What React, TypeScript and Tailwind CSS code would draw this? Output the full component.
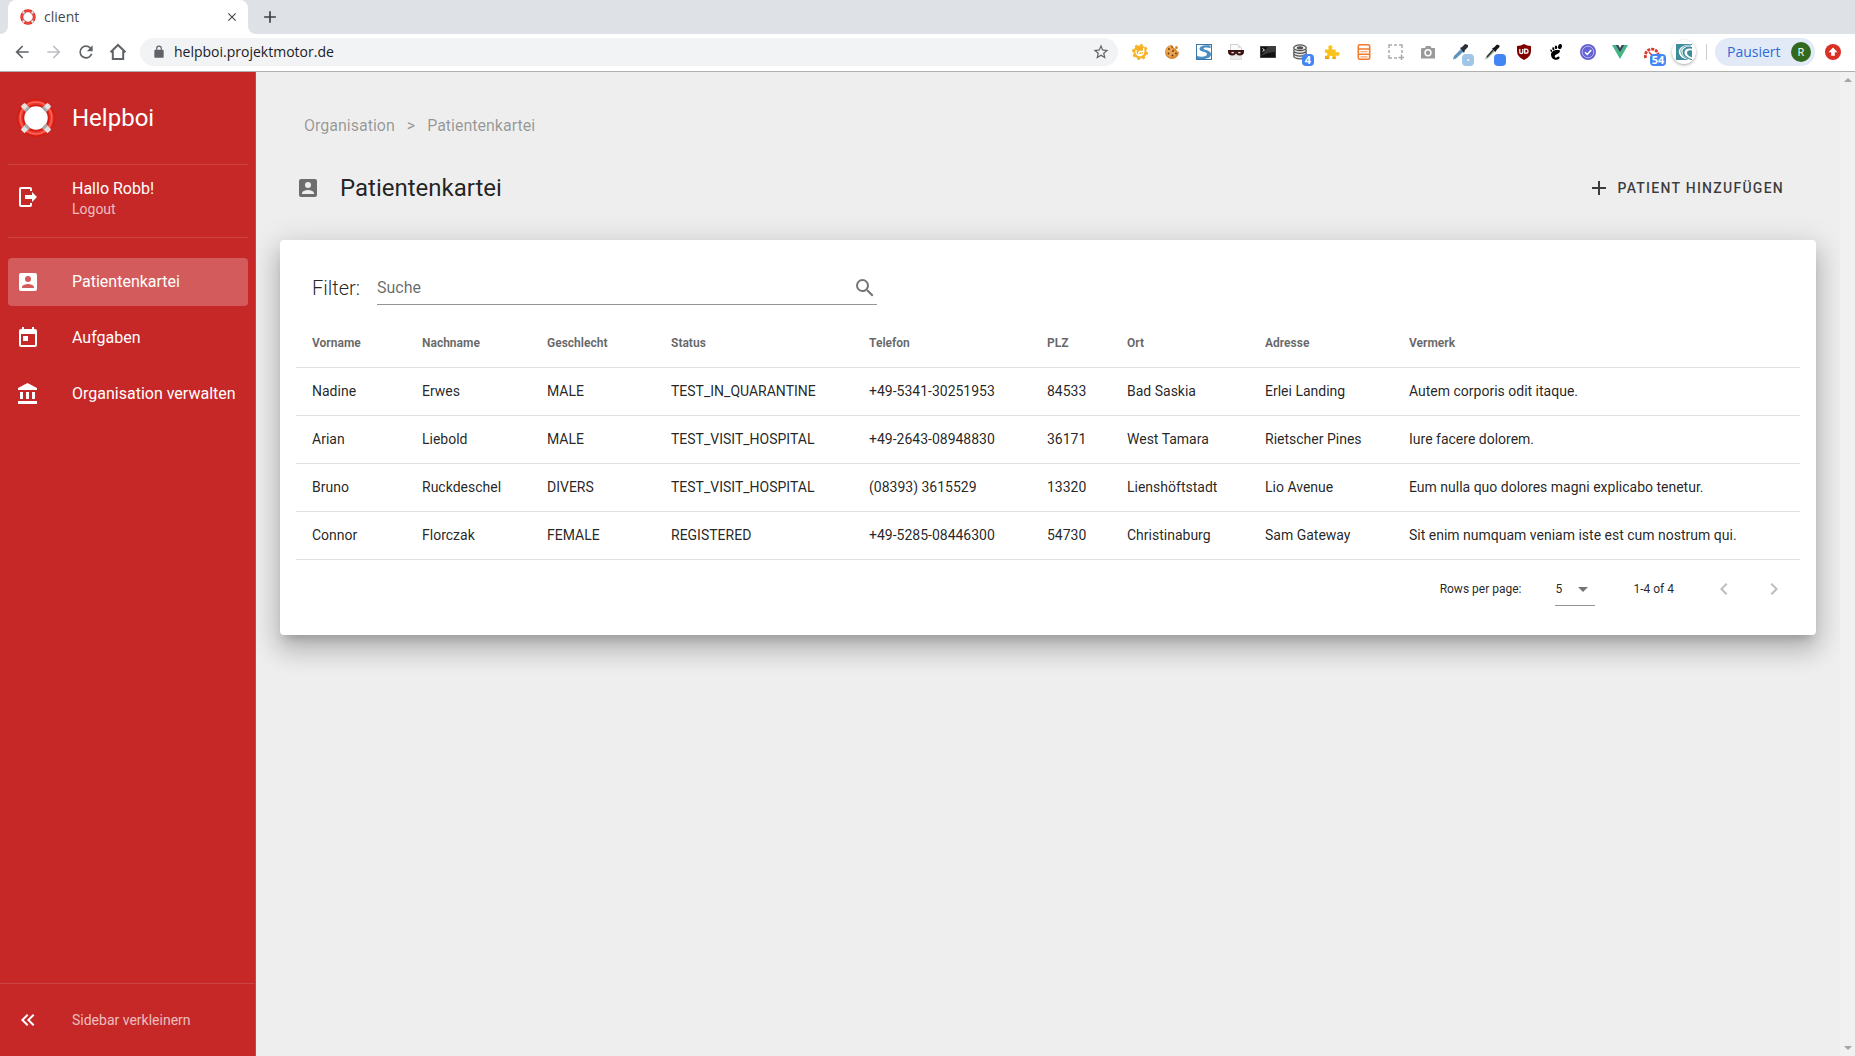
import React, { useState } from 'react';
import clsx from 'clsx';

const mdi = {
  accountBox: 'M6,17C6,15 10,13.9 12,13.9C14,13.9 18,15 18,17V18H6M15,9A3,3 0 0,1 12,12A3,3 0 0,1 9,9A3,3 0 0,1 12,6A3,3 0 0,1 15,9M3,5V19A2,2 0 0,0 5,21H19A2,2 0 0,0 21,19V5A2,2 0 0,0 19,3H5C3.89,3 3,3.9 3,5Z',
  logout: 'M16,17V14H9V10H16V7L21,12L16,17M14,2A2,2 0 0,1 16,4V6H14V4H5V20H14V18H16V20A2,2 0 0,1 14,22H5A2,2 0 0,1 3,20V4A2,2 0 0,1 5,2H14Z',
  calendar: 'M7,10H12V15H7M19,19H5V8H19M19,3H18V1H16V3H8V1H6V3H5C3.89,3 3,3.9 3,5V19A2,2 0 0,0 5,21H19A2,2 0 0,0 21,19V5A2,2 0 0,0 19,3Z',
  bank: 'M11.5,1L2,6V8H21V6M16,10V17H19V10M2,22H21V19H2M10,10V17H13V10M4,10V17H7V10H4Z',
  doubleLeft: 'M18.41,7.41L17,6L11,12L17,18L18.41,16.59L13.83,12L18.41,7.41M12.41,7.41L11,6L5,12L11,18L12.41,16.59L7.83,12L12.41,7.41Z',
  plus: 'M19,13H13V19H11V13H5V11H11V5H13V11H19V13Z',
  magnify: 'M9.5,3A6.5,6.5 0 0,1 16,9.5C16,11.11 15.41,12.59 14.44,13.73L14.71,14H15.5L20.5,19L19,20.5L14,15.5V14.71L13.73,14.44C12.59,15.41 11.11,16 9.5,16A6.5,6.5 0 0,1 3,9.5A6.5,6.5 0 0,1 9.5,3M9.5,5C7,5 5,7 5,9.5C5,12 7,14 9.5,14C12,14 14,12 14,9.5C14,7 12,5 9.5,5Z',
  chevronLeft: 'M15.41,16.58L10.83,12L15.41,7.41L14,6L8,12L14,18L15.41,16.58Z',
  chevronRight: 'M8.59,16.58L13.17,12L8.59,7.41L10,6L16,12L10,18L8.59,16.58Z',
  menuDown: 'M7,10L12,15L17,10H7Z',
  back: 'M20,11V13H8L13.5,18.5L12.08,19.92L4.16,12L12.08,4.08L13.5,5.5L8,11H20Z',
  forward: 'M4,11V13H16L10.5,18.5L11.92,19.92L19.84,12L11.92,4.08L10.5,5.5L16,11H4Z',
  refresh: 'M17.65,6.35C16.2,4.9 14.21,4 12,4A8,8 0 0,0 4,12A8,8 0 0,0 12,20C15.73,20 18.84,17.45 19.73,14H17.65C16.83,16.33 14.61,18 12,18A6,6 0 0,1 6,12A6,6 0 0,1 12,6C13.66,6 15.14,6.69 16.22,7.78L13,11H20V4L17.65,6.35Z',
  lock: 'M18,8H17V6A5,5 0 0,0 7,6V8H6A2,2 0 0,0 4,10V20A2,2 0 0,0 6,22H18A2,2 0 0,0 20,20V10A2,2 0 0,0 18,8M9,6A3,3 0 0,1 15,6V8H9Z',
  star: 'M12,15.39L8.24,17.66L9.23,13.38L5.91,10.5L10.29,10.13L12,6.09L13.71,10.13L18.09,10.5L14.77,13.38L15.76,17.66M22,9.24L14.81,8.63L12,2L9.19,8.63L2,9.24L7.45,13.97L5.82,21L12,17.27L18.18,21L16.54,13.97L22,9.24Z',
  close: 'M19,6.41L17.59,5L12,10.59L6.41,5L5,6.41L10.59,12L5,17.59L6.41,19L12,13.41L17.59,19L19,17.59L13.41,12L19,6.41Z',
};

const Icon = ({ path, className = 'size-6' }: { path: string; className?: string }) => (
  <svg viewBox="0 0 24 24" className={clsx('shrink-0', className)} fill="currentColor" aria-hidden="true">
    <path d={path} />
  </svg>
);

const LifeBuoy = ({ className }: { className: string }) => (
  <svg viewBox="0 0 40 40" className={clsx('shrink-0', className)} aria-hidden="true">
    <clipPath id="buoy">
      <circle cx="20" cy="20" r="19" />
    </clipPath>
    <circle cx="20" cy="20" r="15.200" fill="none" stroke="#d51c13" strokeWidth="8" />
    <circle cx="20" cy="20" r="15.500" fill="none" stroke="#ec3a30" strokeWidth="4" />
    <circle cx="20" cy="20" r="15.800" fill="none" stroke="#fb6a5e" strokeWidth="1.300" />
    <circle cx="20" cy="20" r="11.700" fill="#fff" />
    <g clipPath="url(#buoy)">
      {[45, 135, 225, 315].map((deg) => (
        <g key={deg} transform={`rotate(${deg} 20 20)`}>
          <rect x="31" y="17.300" width="9" height="5.400" fill="#e2e2e2" />
          <rect x="31" y="17.300" width="3" height="5.400" fill="#a9a9a9" />
        </g>
      ))}
    </g>
  </svg>
);

// toolbar extensions, each drawn on a 16x16 grid
const extensions: { name: string; art: React.ReactNode; badge?: string; badgeClass?: string; round?: boolean }[] = [
  {
    name: 'Gear',
    art: (
      <>
        <circle cx="8" cy="8" r="6.6" fill="#f6b127" />
        <circle cx="8" cy="8" r="7" fill="none" stroke="#f6b127" strokeWidth="2" strokeDasharray="2.8 2.7" />
        <path d="M4.3 6a4 4 0 1 0 7.400 .5V4M11.500 7.500H8.400a1.600 1.600 0 1 0 1.400 2" fill="none" stroke="#fff" strokeWidth="1.3" />
      </>
    ),
  },
  {
    name: 'Cookies',
    art: (
      <>
        <path d="M8 1a7 7 0 1 0 7 7l-2-1-1-2-2-1z" fill="#d98a33" />
        <path d="M7 1.8A5.6 5.6 0 1 0 13 8L9 6z" fill="#eaa551" />
        <g fill="#6a350f">
          <circle cx="5" cy="5" r=".9" /><circle cx="9" cy="7" r=".9" /><circle cx="4.500" cy="9.500" r=".9" />
          <circle cx="8.500" cy="11.500" r="1" /><circle cx="12" cy="9.500" r=".9" /><circle cx="8" cy="3" r=".7" />
        </g>
        <circle cx="12.500" cy="3.600" r="1.500" fill="#d98a33" />
      </>
    ),
  },
  {
    name: 'Stylish',
    art: (
      <>
        <rect width="16" height="16" fill="#3a76a8" />
        <path d="M1 1h14v14H1z" fill="#fff" />
        <path d="M14.500 1.500C8 .5 3.500 2 3.500 5c0 3 7.500 2.500 7.500 5S6 13.500 1 12v3c8 .5 14-.5 14-4.800 0-4.400-7.500-3.900-7.500-5.700 0-1.500 4-1.300 7-.5z" fill="#4a8fc3" />
      </>
    ),
  },
  {
    name: 'Incognito',
    art: (
      <>
        <path d="M2.500 8V.5H10L13.500 4v4z" fill="#fafafa" stroke="#bbb" strokeWidth=".7" />
        <path d="M10 .5V4h3.500" fill="#ddd" />
        <path d="M2.500 11v4.500h11V11z" fill="#e9e9e9" stroke="#ccc" strokeWidth=".6" />
        <path d="M0 6h16v2.500q-.5 3-4.500 3Q9 11.500 8 9.500q-1 2-3.500 2Q.5 11.500 0 8.500z" fill="#3c1512" />
        <path d="M3 8.700q1.700-1.400 3.300 0-1.600 1.300-3.300 0zM9.700 8.700q1.700-1.400 3.300 0-1.600 1.300-3.300 0z" fill="#fff" />
      </>
    ),
  },
  {
    name: 'Terminal',
    art: (
      <>
        <rect y="2" width="16" height="12" fill="#555" />
        <rect x=".7" y="2.700" width="14.600" height="10.600" fill="#111" />
        <path d="M8 2.700h7.300V8Q10 8 1 12z" fill="#3a3a3a" />
        <path d="M2.500 4.500l2 1.500-2 1.500" fill="none" stroke="#eee" />
      </>
    ),
  },
  {
    name: 'Database',
    badge: '4',
    badgeClass: 'bg-[#4285f4] w-3',
    art: (
      <g fill="#e8e8e8" stroke="#555" strokeWidth="1.300">
        <ellipse cx="8" cy="12" rx="6.300" ry="2.800" />
        <ellipse cx="8" cy="9.300" rx="6.300" ry="2.800" />
        <ellipse cx="8" cy="6.500" rx="6.300" ry="2.800" />
        <ellipse cx="8" cy="3.700" rx="6.300" ry="2.800" />
        <ellipse cx="8" cy="3.700" rx="2.500" ry=".9" fill="#555" />
      </g>
    ),
  },
  {
    name: 'Puzzle',
    art: (
      <>
        <path d="M1 5.500h4q-1.200-1.500-.6-3 .8-1.500 2.300-1.300 2 .3 1.800 2.300-.1 1-.8 2h4v3q3-1.200 3.800.8.300 2.500-1.800 2.700-1 0-2-.7V15H8.500q1-3-1.700-3.200Q4.500 12 5.500 15H1v-3.500q2 .8 2.500-1Q3.300 8 1 9z" fill="#fcc21b" />
        <path d="M1 12.500h3.500L5.500 15H1zM8.500 13h3.200v2H8.500z" fill="#f0a30a" />
      </>
    ),
  },
  {
    name: 'Notes',
    art: (
      <>
        <rect x="2.300" y=".8" width="11.400" height="14.400" rx="1.500" fill="#fff" stroke="#f47b2c" strokeWidth="1.600" />
        <path d="M2.500 5h11M2.500 10.300h11" stroke="#f47b2c" strokeWidth="1.600" />
        <path d="M4.500 7.700h7M4.500 12.800h7" stroke="#f9a56f" strokeWidth="1.200" />
      </>
    ),
  },
  {
    name: 'Selection',
    art: (
      <path d="M1 4V1h3M6 1h3M11 1h3v3M14 6v3M1 6v3M1 11v3h3M6 14h3M13.500 10.500v5.500M10.500 13.500H16" fill="none" stroke="#aaa" strokeWidth="1.500" />
    ),
  },
  {
    name: 'Camera',
    art: (
      <>
        <path d="M2.500 4H5l1-2h4.500l1 2H15v10.500H1V4.500z" fill="#9a9a9a" />
        <circle cx="8" cy="8.800" r="3.700" fill="#fff" />
        <circle cx="8" cy="8.800" r="2.200" fill="#9a9a9a" />
      </>
    ),
  },
  {
    name: 'Eye dropper',
    badge: '·',
    badgeClass: 'bg-[#9fc5e8] w-3',
    art: (
      <>
        <path d="M9 5l2.500 2.500L4 14.500l-3 1L2 12z" fill="#5b93bd" />
        <path d="M8 4l2-1 3-3 3 1v2l-3 3-1 3z" fill="#2b3137" />
      </>
    ),
  },
  {
    name: 'ColorZilla',
    badge: ' ',
    badgeClass: 'bg-[#4285f4] w-3',
    art: (
      <>
        <path d="M9 5l2 2-7 7-3 1.500L2.500 12z" fill="#8fa88f" />
        <path d="M8 4.500l2-1L13 .5l2.500 1v1.500l-3 3-1 2z" fill="#151515" />
        <path d="M9 6l-6 7" stroke="#333" strokeWidth="1.200" />
      </>
    ),
  },
  {
    name: 'uBlock Origin',
    art: (
      <>
        <path d="M8 0q3 2 7 2v5q0 6-7 9-7-3-7-9V2q4 0 7-2z" fill="#800000" />
        <path d="M3.800 5v3.200q0 1.300 1.500 1.300T6.800 8.200V5" fill="none" stroke="#fff" strokeWidth="1.300" />
        <path d="M8.700 5.200h1.300a2 2 0 0 1 0 4H8.700z" fill="none" stroke="#fff" strokeWidth="1.300" />
      </>
    ),
  },
  {
    name: 'GNOME',
    art: (
      <g fill="#000">
        <path d="M12 6.500C8 5 3 7 3 10.500 3 14 6 16 8.500 15.800c2 0 3.500-1.300 3-2.700-.5-1.300-2-.5-2.500.2-.9.900-2.600.2-2.200-1.300.6-1.900 5.500-2.200 5.200-5.500z" />
        <ellipse cx="12" cy="2.600" rx="1.900" ry="2.600" transform="rotate(15 12 2.600)" />
        <ellipse cx="8" cy="3.300" rx="1.200" ry="1.900" />
        <ellipse cx="5.300" cy="4.800" rx="1" ry="1.600" transform="rotate(-15 5.300 4.800)" />
        <ellipse cx="3.200" cy="6.700" rx=".8" ry="1.300" transform="rotate(-25 3.200 6.700)" />
      </g>
    ),
  },
  {
    name: 'Verified',
    art: (
      <>
        <circle cx="8" cy="8" r="8" fill="#6663d3" />
        <circle cx="8" cy="8" r="5.800" fill="none" stroke="#b5b3f2" strokeWidth="1" />
        <path d="M5 8.200l2.200 2.200L11.200 6" fill="none" stroke="#fff" strokeWidth="1.500" />
      </>
    ),
  },
  {
    name: 'Vue devtools',
    art: (
      <>
        <path d="M0 1h3.500L8 8.800 12.500 1H16L8 15z" fill="#41b883" />
        <path d="M3.500 1h2.800L8 4l1.700-3h2.800L8 8.800z" fill="#35495e" />
      </>
    ),
  },
  {
    name: 'Speed',
    badge: '54',
    badgeClass: 'bg-[#4285f4] w-4',
    art: (
      <>
        <path d="M1.800 14A6.500 6.500 0 1 1 14.300 11" fill="none" stroke="#d93a2b" strokeWidth="2.800" strokeDasharray="3 1" />
        <path d="M5 8l3.500 4" stroke="#d93a2b" strokeWidth="1.300" />
      </>
    ),
  },
  {
    name: 'Wave',
    round: true,
    art: (
      <>
        <rect width="16" height="16" fill="#3d8b9b" />
        <path d="M16 1C8-.5 1.500 4 3 9c1 4 5 6 10 7h2C9 13.500 6.500 11 6.500 8 6.500 4 11 2 16 3z" fill="#fff" />
        <path d="M16 5c-4-1.200-7.500.5-7.500 3.500S11 13.500 16 15v-1.500c-3-1-5-2.700-5-4.700S13 5.500 16 6.500z" fill="#fff" />
        <path d="M15 2C9 1 3.800 4 5 8.500c1 3 3 5 7 6.500" fill="none" stroke="#3d8b9b" strokeWidth=".8" />
      </>
    ),
  },
];

const BrowserChrome = () => (
  <header className="shrink-0 border-b border-[#b0b0b0] bg-white font-['Open_Sans','Noto_Sans',sans-serif] text-sm">
    <div className="flex h-[34px] items-center bg-[#dee1e6]">
      <div className="w-2 self-stretch bg-white">
        <div className="h-full rounded-br-lg bg-[#dee1e6]" />
      </div>
      <div className="flex h-full w-60 items-center rounded-t-lg bg-white pl-3 pr-2">
        <LifeBuoy className="size-4" />
        <span className="ml-2 flex-1 text-[#45494d]">client</span>
        <button type="button" aria-label="Tab schließen" className="flex size-4 items-center justify-center text-[#45494d]">
          <Icon path={mdi.close} className="size-3.5" />
        </button>
      </div>
      <div className="w-2 self-stretch bg-white">
        <div className="h-full rounded-bl-lg bg-[#dee1e6]" />
      </div>
      <button type="button" aria-label="Neuer Tab" className="ml-1 flex size-5 items-center justify-center text-[#3c4043]">
        <Icon path={mdi.plus} className="size-5" />
      </button>
    </div>
    <div className="flex h-[37px] items-center pb-px pl-3">
      <nav className="flex gap-3 text-[#5f6368]">
        <button type="button" aria-label="Zurück"><Icon path={mdi.back} className="size-5" /></button>
        <button type="button" aria-label="Vor" className="text-[#bdc0c3]"><Icon path={mdi.forward} className="size-5" /></button>
        <button type="button" aria-label="Neu laden"><Icon path={mdi.refresh} className="size-5" /></button>
        <button type="button" aria-label="Startseite">
          <svg viewBox="0 0 20 20" className="size-5" fill="none" stroke="currentColor" strokeWidth="2" aria-hidden="true">
            <path d="M2.500 10.200L10 3l7.500 7.200M4.800 9v8h10.400V9" />
          </svg>
        </button>
      </nav>
      <div className="ml-3 flex h-7 flex-1 items-center rounded-full bg-[#f1f3f4] pl-3 pr-2 text-[#5f6368]">
        <Icon path={mdi.lock} className="size-3.5" />
        <input
          type="text"
          aria-label="Adresse"
          defaultValue="helpboi.projektmotor.de"
          className="ml-2 min-w-0 flex-1 bg-transparent text-[#202124] outline-none"
        />
        <button type="button" aria-label="Lesezeichen"><Icon path={mdi.star} className="size-[18px]" /></button>
      </div>
      <div className="ml-3.5 flex gap-4">
        {extensions.map((ext) => (
          <button
            key={ext.name}
            type="button"
            aria-label={ext.name}
            className={clsx('relative size-4', ext.round && 'rounded-full bg-white shadow-[0_0_0_4px_#fff,0_1px_3px_4px_rgba(0,0,0,0.35)]')}
          >
            <svg viewBox="0 0 16 16" className="size-4" aria-hidden="true">{ext.art}</svg>
            {ext.badge && (
              <span className={clsx('absolute -bottom-1.5 -right-1.5 h-3 rounded-sm text-center text-[11px] font-bold leading-3 text-white', ext.badgeClass)}>
                {ext.badge}
              </span>
            )}
          </button>
        ))}
      </div>
      <div className="ml-3.5 h-4 w-px bg-[#c9ccd0]" />
      <button type="button" className="ml-2 flex h-7 w-[100px] items-center justify-between rounded-full bg-[#e2eaf8] pl-3 pr-1 text-[#2f6bd8]">
        Pausiert
        <span className="flex size-5 items-center justify-center rounded-full bg-[#33691e] text-[11px] text-white">R</span>
      </button>
      <button type="button" aria-label="Aktualisieren" className="ml-2.5 mr-3.5">
        <svg viewBox="0 0 16 16" className="size-4" aria-hidden="true">
          <circle cx="8" cy="8" r="8" fill="#d93025" />
          <path d="M8 3.500l4.500 4.700h-2.700v3.600H6.200V8.200H3.500z" fill="#fff" />
        </svg>
      </button>
    </div>
  </header>
);

const navItems = [
  { label: 'Patientenkartei', icon: mdi.accountBox, active: true },
  { label: 'Aufgaben', icon: mdi.calendar, active: false },
  { label: 'Organisation verwalten', icon: mdi.bank, active: false },
];

const Sidebar = () => (
  <aside className="relative z-10 flex w-64 shrink-0 flex-col border-r border-white/12 bg-[#c62828] text-white">
    <div className="ml-2 mr-[7px] flex h-[93px] items-center gap-4 border-b border-white/12 pl-2">
      <LifeBuoy className="size-10" />
      <span className="text-2xl">Helpboi</span>
    </div>
    <div className="ml-2 mr-[7px] flex h-[73px] items-center gap-8 border-b border-white/12 px-2 pb-2">
      <Icon path={mdi.logout} />
      <div className="pt-1">
        <p className="text-base leading-5">Hallo Robb!</p>
        <a href="#logout" className="block text-sm leading-5 text-white/70">Logout</a>
      </div>
    </div>
    <nav className="ml-2 mr-[7px] mt-5 flex flex-1 flex-col gap-2">
      {navItems.map((item) => (
        <a
          key={item.label}
          href="#"
          className={clsx('flex h-12 items-center gap-8 whitespace-nowrap rounded px-2', item.active && 'bg-white/24')}
        >
          <Icon path={item.icon} />
          {item.label}
        </a>
      ))}
    </nav>
    <button type="button" className="flex h-[73px] items-center gap-8 border-t border-white/12 px-4 text-left text-sm">
      <Icon path={mdi.doubleLeft} />
      <span className="text-white/70">Sidebar verkleinern</span>
    </button>
  </aside>
);

const columns = [
  { title: 'Vorname', width: 'w-[110px]' },
  { title: 'Nachname', width: 'w-[125px]' },
  { title: 'Geschlecht', width: 'w-[124px]' },
  { title: 'Status', width: 'w-[198px]' },
  { title: 'Telefon', width: 'w-[178px]' },
  { title: 'PLZ', width: 'w-[80px]' },
  { title: 'Ort', width: 'w-[138px]' },
  { title: 'Adresse', width: 'w-[144px]' },
  { title: 'Vermerk', width: 'w-auto' },
];

const patients = [
  ['Nadine', 'Erwes', 'MALE', 'TEST_IN_QUARANTINE', '+49-5341-30251953', '84533', 'Bad Saskia', 'Erlei Landing', 'Autem corporis odit itaque.'],
  ['Arian', 'Liebold', 'MALE', 'TEST_VISIT_HOSPITAL', '+49-2643-08948830', '36171', 'West Tamara', 'Rietscher Pines', 'Iure facere dolorem.'],
  ['Bruno', 'Ruckdeschel', 'DIVERS', 'TEST_VISIT_HOSPITAL', '(08393) 3615529', '13320', 'Lienshöftstadt', 'Lio Avenue', 'Eum nulla quo dolores magni explicabo tenetur.'],
  ['Connor', 'Florczak', 'FEMALE', 'REGISTERED', '+49-5285-08446300', '54730', 'Christinaburg', 'Sam Gateway', 'Sit enim numquam veniam iste est cum nostrum qui.'],
];

const PatientCard = () => {
  const [search, setSearch] = useState('');
  const rows = patients.filter((row) => row.join(' ').toLowerCase().includes(search.toLowerCase()));

  return (
    <section className="rounded bg-white p-4 shadow-[0_8px_10px_-5px_rgba(0,0,0,0.2),0_16px_24px_2px_rgba(0,0,0,0.14),0_6px_30px_5px_rgba(0,0,0,0.12)]">
      <div className="flex items-center gap-[17px] px-4 pt-3.5">
        <label htmlFor="search" className="text-xl font-light">Filter:</label>
        <div className="flex h-[35px] w-[500px] items-center border-b border-black/42 pt-0.5">
          <input
            id="search"
            type="text"
            placeholder="Suche"
            value={search}
            onChange={(e) => setSearch(e.target.value)}
            className="min-w-0 flex-1 bg-transparent text-base outline-none placeholder:text-black/60"
          />
          <Icon path={mdi.magnify} className="size-6 text-black/54" />
        </div>
      </div>
      <table className="mt-3.5 w-full border-collapse text-left text-sm">
        <thead>
          <tr className="h-12 border-b border-black/12 text-xs text-black/60">
            {columns.map((column) => (
              <th key={column.title} className={clsx('px-4 font-bold', column.width)}>{column.title}</th>
            ))}
          </tr>
        </thead>
        <tbody>
          {rows.map((row) => (
            <tr key={row[4]} className="h-12 border-b border-black/12">
              {row.map((cell, index) => (
                <td key={index} className="px-4">{cell}</td>
              ))}
            </tr>
          ))}
        </tbody>
      </table>
      <div className="flex h-[59px] items-center justify-end pr-2 text-xs">
        <label htmlFor="rows">Rows per page:</label>
        <div className="relative ml-[34px] flex h-[33px] items-center border-b border-black/42">
          <select id="rows" defaultValue="5" className="w-10 appearance-none bg-transparent outline-none">
            <option>5</option>
            <option>10</option>
            <option>15</option>
          </select>
          <Icon path={mdi.menuDown} className="pointer-events-none absolute right-0 size-6 text-black/54" />
        </div>
        <span className="ml-[38px]">1-4 of {rows.length}</span>
        <button type="button" disabled aria-label="Vorherige Seite" className="ml-8 p-1.5 text-black/26">
          <Icon path={mdi.chevronLeft} />
        </button>
        <button type="button" disabled aria-label="Nächste Seite" className="ml-3.5 p-1.5 text-black/26">
          <Icon path={mdi.chevronRight} />
        </button>
      </div>
    </section>
  );
};

const App = () => {
  return (
    <div className="flex h-screen flex-col overflow-hidden font-['Roboto',sans-serif] text-black/87">
      <BrowserChrome />
      <div className="flex min-h-0 flex-1 bg-[#eee]">
        <Sidebar />
        <main className="min-w-0 flex-1 px-6 pt-[42px]">
          <nav className="flex gap-3 px-6 text-black/38" aria-label="Breadcrumb">
            <a href="#">Organisation</a>
            <span>&gt;</span>
            <a href="#">Patientenkartei</a>
          </nav>
          <div className="mb-7 mt-[26px] flex h-12 items-center pl-4">
            <Icon path={mdi.accountBox} className="size-6 text-black/54" />
            <h1 className="ml-5 flex-1 text-2xl">Patientenkartei</h1>
            <button type="button" className="flex h-12 items-center gap-1.5 px-8 text-sm font-medium uppercase tracking-[0.09em] text-black/75">
              <Icon path={mdi.plus} className="size-6" />
              Patient hinzufügen
            </button>
          </div>
          <PatientCard />
        </main>
        <div className="relative flex w-[15px] shrink-0 flex-col items-center justify-between bg-[#f1f1f1] py-1.5 text-[#a3a3a3]" aria-hidden="true">
          <svg viewBox="0 0 8 4" className="h-1 w-2" fill="currentColor"><path d="M0 4L4 0l4 4z" /></svg>
          <svg viewBox="0 0 8 4" className="h-1 w-2" fill="currentColor"><path d="M0 0l4 4 4-4z" /></svg>
        </div>
      </div>
    </div>
  );
};

export default App;
